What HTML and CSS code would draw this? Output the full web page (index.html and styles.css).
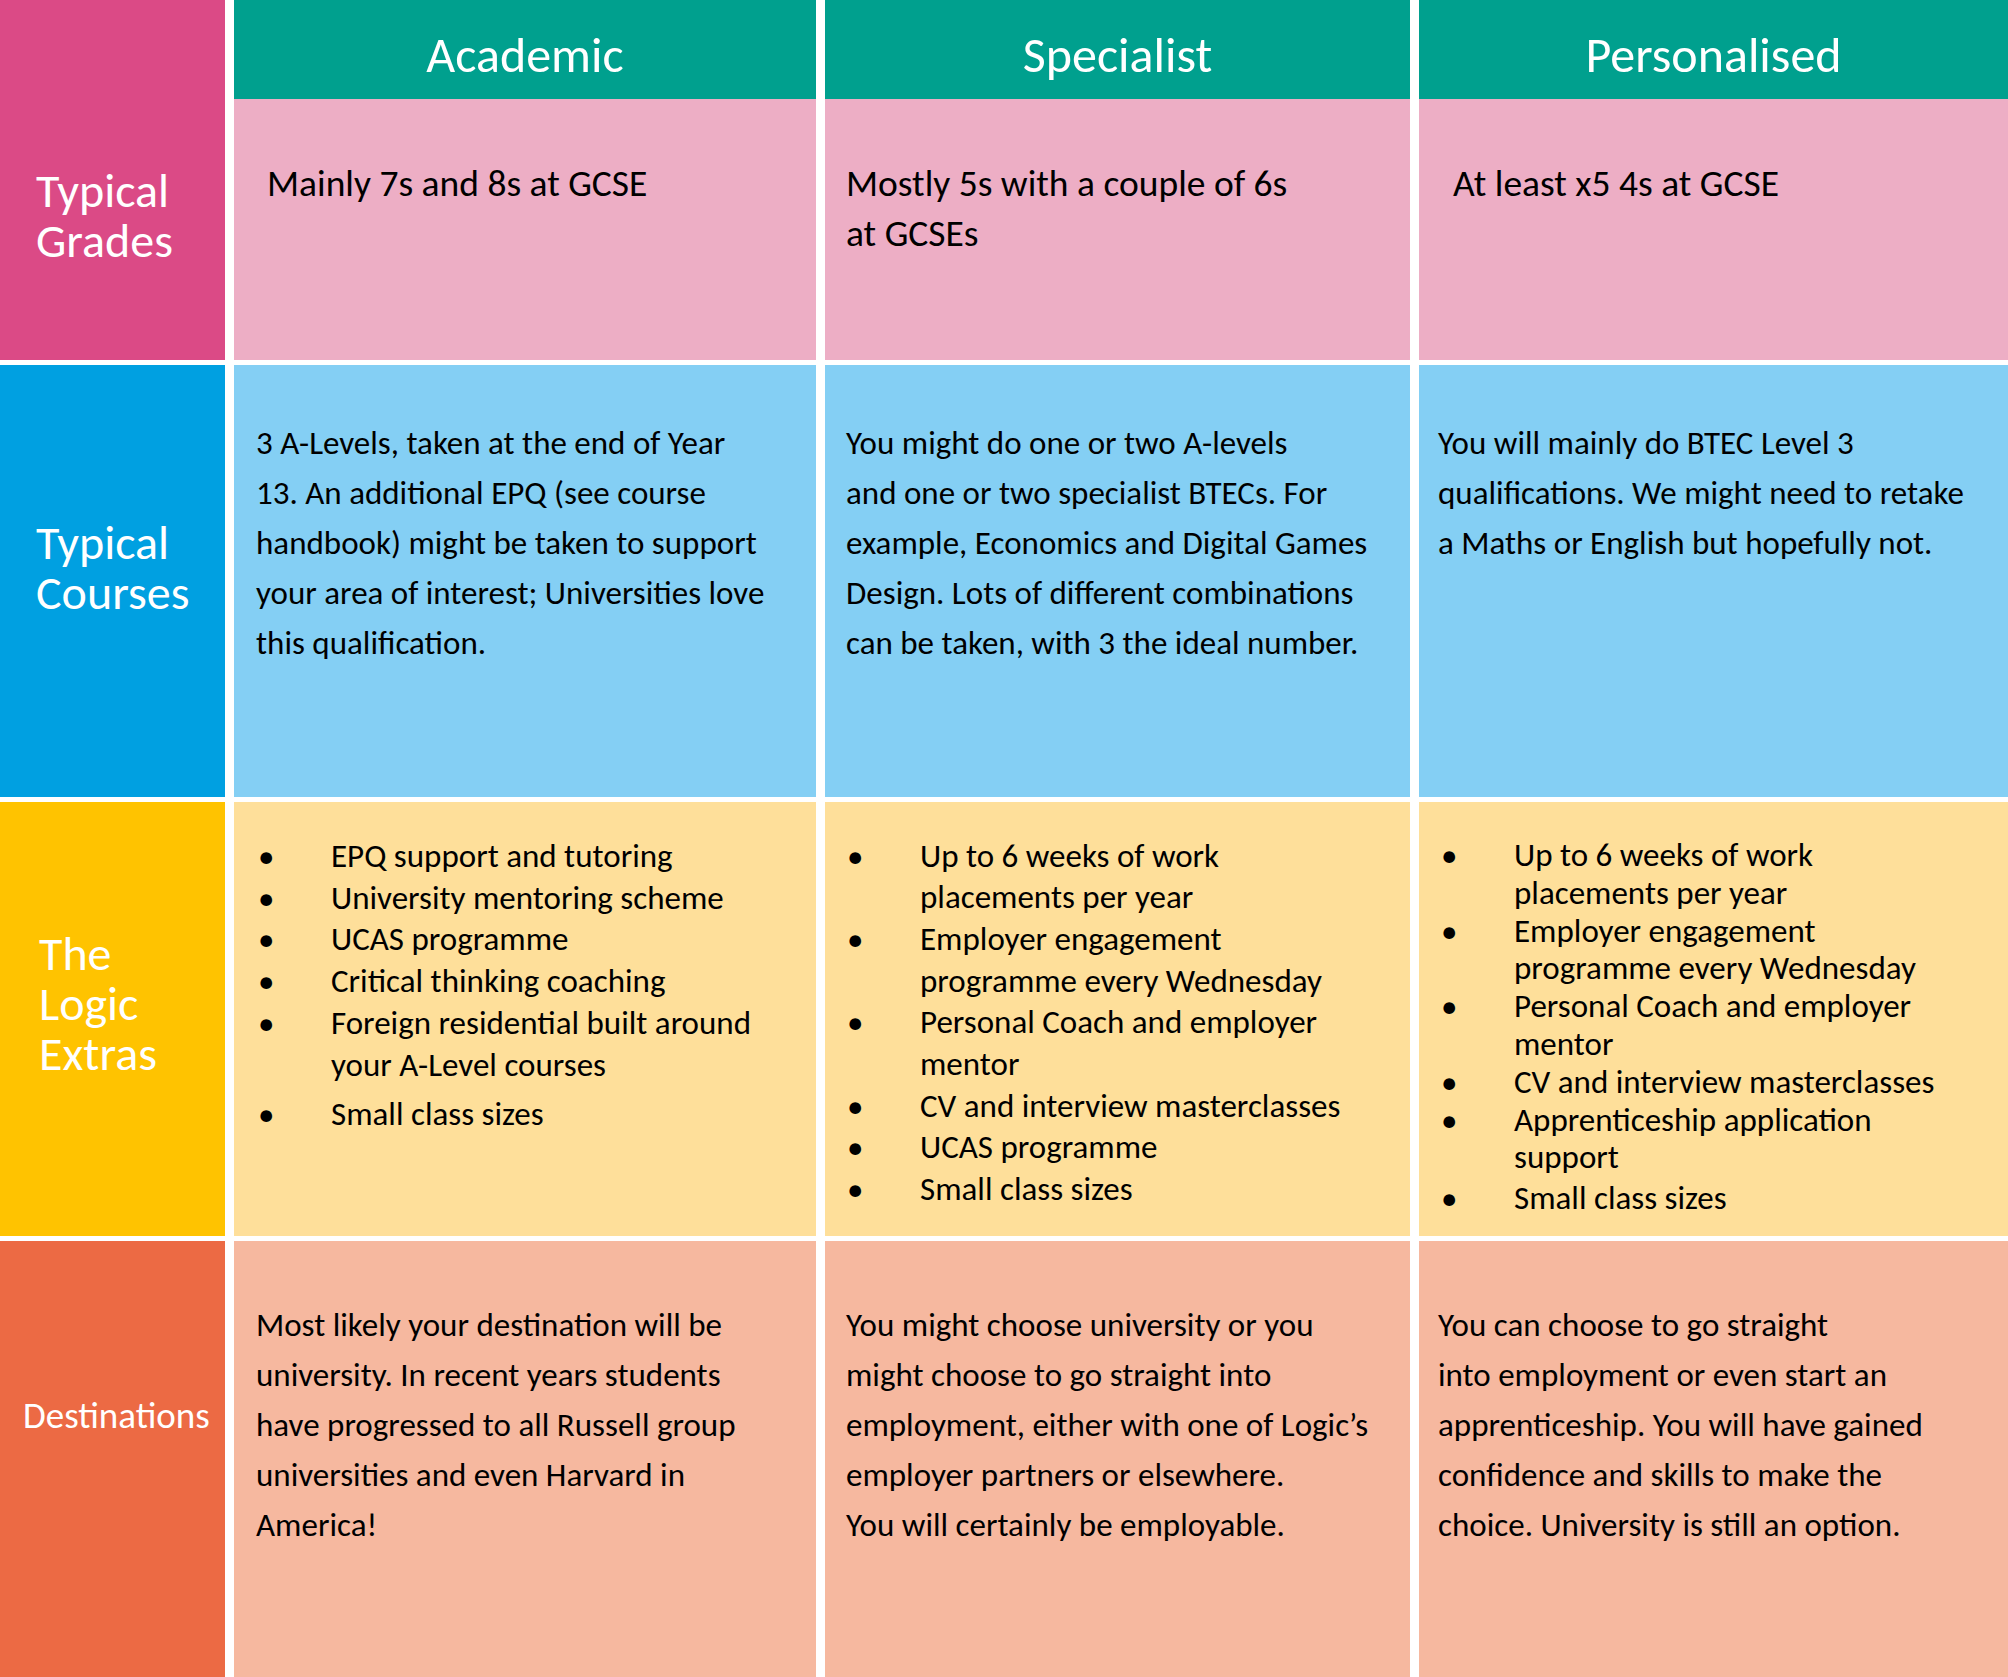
FILE: index.html
```html
<!DOCTYPE html>
<html lang="en">
<head>
<meta charset="utf-8">
<title>Pathways</title>
<link rel="stylesheet" href="styles.css">
</head>
<body>
<div class="board">
  <div class="label grades-label"><span class="label-text lt-grades">Typical<br>Grades</span></div>
  <div class="col">
    <div class="head">Academic</div>
    <div class="cell grades c1-grades"><p>Mainly 7s and 8s at GCSE</p></div>
  </div>
  <div class="col">
    <div class="head">Specialist</div>
    <div class="cell grades c2-grades"><p>Mostly 5s with a couple of 6s<br>at GCSEs</p></div>
  </div>
  <div class="col">
    <div class="head">Personalised</div>
    <div class="cell grades c3-grades"><p>At least x5 4s at GCSE</p></div>
  </div>

  <div class="label courses-label"><span class="label-text lt-courses">Typical<br>Courses</span></div>
  <div class="cell courses c1-text"><p>3 A-Levels, taken at the end of Year<br>13. An additional EPQ (see course<br>handbook) might be taken to support<br>your area of interest; Universities love<br>this qualification.</p></div>
  <div class="cell courses c2-text"><p>You might do one or two A-levels<br>and one or two specialist BTECs. For<br>example, Economics and Digital Games<br>Design. Lots of different combinations<br>can be taken, with 3 the ideal number.</p></div>
  <div class="cell courses c3-text"><p>You will mainly do BTEC Level 3<br>qualifications. We might need to retake<br>a Maths or English but hopefully not.</p></div>

  <div class="label extras-label"><span class="label-text lt-extras">The<br>Logic<br>Extras</span></div>
  <div class="cell extras c1-list">
    <ul class="list">
      <li><span class="dot">•</span><span>EPQ support and tutoring</span></li>
      <li><span class="dot">•</span><span>University mentoring scheme</span></li>
      <li><span class="dot">•</span><span>UCAS programme</span></li>
      <li><span class="dot">•</span><span>Critical thinking coaching</span></li>
      <li><span class="dot">•</span><span>Foreign residential built around<br>your A-Level courses</span></li>
      <li class="gap-item"><span class="dot">•</span><span>Small class sizes</span></li>
    </ul>
  </div>
  <div class="cell extras c2-list">
    <ul class="list">
      <li><span class="dot">•</span><span>Up to 6 weeks of work<br>placements per year</span></li>
      <li><span class="dot">•</span><span>Employer engagement<br>programme every Wednesday</span></li>
      <li><span class="dot">•</span><span>Personal Coach and employer<br>mentor</span></li>
      <li><span class="dot">•</span><span>CV and interview masterclasses</span></li>
      <li><span class="dot">•</span><span>UCAS programme</span></li>
      <li><span class="dot">•</span><span>Small class sizes</span></li>
    </ul>
  </div>
  <div class="cell extras c3-list">
    <ul class="list tight">
      <li><span class="dot">•</span><span>Up to 6 weeks of work<br>placements per year</span></li>
      <li><span class="dot">•</span><span>Employer engagement<br>programme every Wednesday</span></li>
      <li><span class="dot">•</span><span>Personal Coach and employer<br>mentor</span></li>
      <li><span class="dot">•</span><span>CV and interview masterclasses</span></li>
      <li><span class="dot">•</span><span>Apprenticeship application<br>support</span></li>
      <li class="gap-small"><span class="dot">•</span><span>Small class sizes</span></li>
    </ul>
  </div>

  <div class="label dest-label"><span class="label-text lt-dest">Destinations</span></div>
  <div class="cell dest c1-text"><p>Most likely your destination will be<br>university. In recent years students<br>have progressed to all Russell group<br>universities and even Harvard in<br>America!</p></div>
  <div class="cell dest c2-text"><p>You might choose university or you<br>might choose to go straight into<br>employment, either with one of Logic’s<br>employer partners or elsewhere.<br>You will certainly be employable.</p></div>
  <div class="cell dest c3-text"><p>You can choose to go straight<br>into employment or even start an<br>apprenticeship. You will have gained<br>confidence and skills to make the<br>choice. University is still an option.</p></div>
</div>
</body>
</html>
```

FILE: styles.css
```css
* { box-sizing: border-box; }

html, body {
  margin: 0;
  padding: 0;
  background: #ffffff;
}

body {
  font-family: Carlito, Calibri, "Liberation Sans Narrow", "Open Sans", sans-serif;
  color: #000000;
  width: 2008px;
  height: 1677px;
  overflow: hidden;
}

.board {
  display: grid;
  grid-template-columns: 225px 582px 585px 1fr;
  grid-template-rows: 360px 432px 434px 436px;
  column-gap: 9px;
  row-gap: 5px;
  width: 2008px;
}

p { margin: 0; }

/* Row labels */
.label {
  color: #ffffff;
}
.label-text {
  display: block;
  font-size: 48px;
  line-height: 50px;
}
.grades-label { background: #db4a86; }
.courses-label { background: #00a0e1; }
.extras-label { background: #ffc300; }
.dest-label { background: #ec6a44; }

.lt-grades { padding: 166px 0 0 36px; }
.lt-courses { padding: 153px 0 0 36px; }
.lt-extras { padding: 127px 0 0 39px; }
.lt-dest {
  font-size: 37px;
  line-height: 40px;
  padding: 155px 0 0 23px;
}

/* Columns with header */
.col {
  display: flex;
  flex-direction: column;
}
.head {
  height: 99px;
  background: #00a08e;
  color: #ffffff;
  font-size: 50px;
  line-height: 50px;
  padding-top: 30px;
  text-align: center;
}

/* Content cells */
.cell {
  font-size: 33px;
  line-height: 50px;
}
.grades {
  flex: 1;
  background: #edaec5;
  font-size: 37.5px;
  padding-top: 59px;
}
.courses {
  background: #84cff4;
  padding-top: 52.5px;
}
.extras {
  background: #fedf9a;
}
.dest {
  background: #f6b89f;
  padding-top: 58.5px;
}

.c1-grades { padding-left: 33px; }
.c2-grades { padding-left: 21px; }
.c3-grades { padding-left: 34px; }

.c1-text { padding-left: 22px; }
.c2-text { padding-left: 21px; }
.c3-text { padding-left: 19px; }

/* Bullet lists */
.list {
  list-style: none;
  margin: 0;
  padding: 0;
  font-size: 33px;
  line-height: 41.7px;
}
.list.tight { line-height: 37.8px; }
.list li {
  display: flex;
}
.list .dot {
  flex: 0 0 73px;
}
.list .gap-item { margin-top: 8px; }
.list .gap-small { margin-top: 3px; }

.c1-list { padding-left: 24px; padding-top: 34px; }
.c2-list { padding-left: 22px; padding-top: 33.5px; }
.c3-list { padding-left: 22px; padding-top: 35px; }
```
